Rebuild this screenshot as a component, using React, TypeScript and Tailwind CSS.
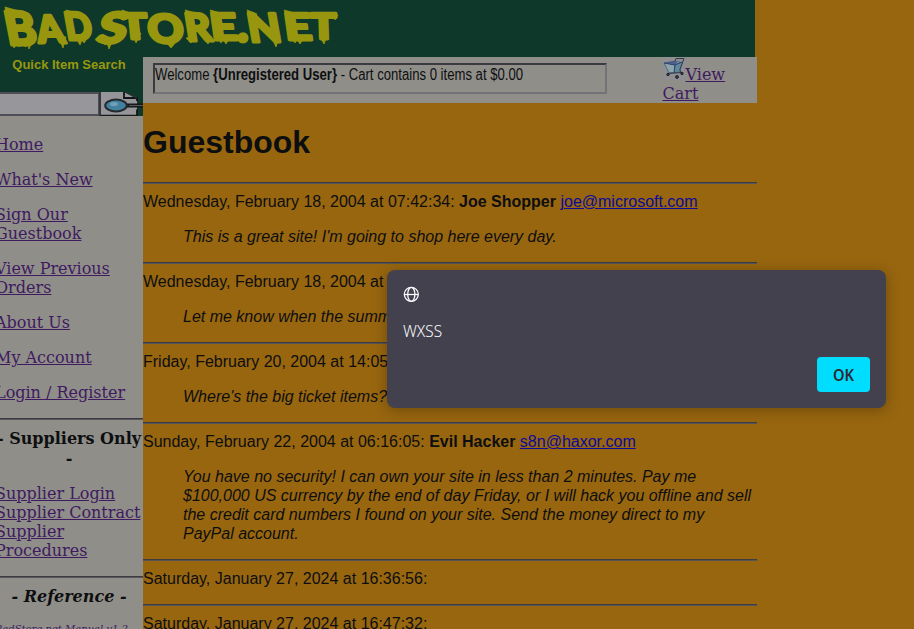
import React from "react";

type LogoLetter = { ch: string; x: number; base: number; w: number; h: number; tilt: number };

const letters: LogoLetter[] = [
  { ch: "B", x: 8, base: 45, w: 31, h: 34, tilt: 11 },
  { ch: "A", x: 39, base: 43, w: 27, h: 28, tilt: 10 },
  { ch: "D", x: 67, base: 40, w: 27, h: 28, tilt: 10 },
  { ch: "S", x: 95, base: 43, w: 29, h: 31, tilt: -14 },
  { ch: "T", x: 122, base: 39, w: 27, h: 26, tilt: 6 },
  { ch: "O", x: 149, base: 43, w: 36, h: 29, tilt: 6 },
  { ch: "R", x: 187, base: 41, w: 26, h: 28, tilt: 9 },
  { ch: "E", x: 212, base: 40, w: 27, h: 27, tilt: 8 },
  { ch: ".", x: 237, base: 42, w: 12, h: 38, tilt: 0 },
  { ch: "N", x: 250, base: 42, w: 33, h: 29, tilt: 10 },
  { ch: "E", x: 286, base: 40, w: 27, h: 27, tilt: 8 },
  { ch: "T", x: 311, base: 39, w: 26, h: 26, tilt: 2 },
];

const drips =
  "M12 42l2 6 3-4 2 3 3-3 4 3 1-5 2 7 4-9z M58 36l5 12 3-11z M76 38l4 7 2-5 2 3 4-6z M102 40l3 5 2-2 2 6 3-7 3 2 3-7z M133 35l3 8 5-10z M166 42l5 6 6-7z M186 38l5 5 3-6z M202 36l6 8 4-7z M218 38l3 5 2-4 3 5 3-5 3 2 2-4z M272 38l4 9 4-12z M292 38l3 5 2-4 3 5 3-5 3 2 2-4z M319 35l5 9 4-11z M5 7l14 4-5 9-6 2z M66 10l11 3-7 6z M185 10l11 3-7 5z M210 10l11 3-7 5z M247 10l10 4-6 7z M284 10l11 3-7 5z M122 10l3 6 8-2z M334 14l4 1-3 5z";

function Logo() {
  return (
    <svg className="block h-[57px] w-[345px]" viewBox="0 0 345 57" aria-label="BadStore.net">
      <g fill="#98960f" stroke="#98960f" strokeWidth="3" strokeLinejoin="round" fontFamily="Lato, 'Liberation Sans', sans-serif" fontWeight="900">
        {letters.map((l, i) => (
          <text
            key={i}
            transform={`translate(${l.x} ${l.base}) skewX(${l.tilt})`}
            fontSize={l.h / 0.73}
            textLength={l.w}
            lengthAdjust="spacingAndGlyphs"
          >
            {l.ch}
          </text>
        ))}
        <path d={drips} strokeWidth="0.8" />
      </g>
    </svg>
  );
}

function SearchIcon() {
  return (
    <svg className="block h-[24px] w-[44px] shrink-0" viewBox="0 0 44 24">
      <path d="M0 0h25l13 7v16H0z" fill="#96959a" />
      <path d="M0 23.4h39" stroke="#15191c" strokeWidth="1.2" />
      <path d="M1 0v24" stroke="#2b2e31" strokeWidth="1.8" />
      <path d="M25 0v6h13v3M38 17.500v6" fill="none" stroke="#111517" strokeWidth="1.8" />
      <path d="M26 0l12 6" stroke="#2a3735" strokeWidth="1.2" />
      <path d="M28 13.500h16" stroke="#14181b" strokeWidth="4" />
      <path d="M30 13.500h14" stroke="#56595a" strokeWidth="1" />
      <ellipse cx="17" cy="13.500" rx="10.800" ry="6" fill="#437f9f" stroke="#23292d" strokeWidth="2" />
      <ellipse cx="15" cy="12" rx="4" ry="2" fill="#6fa0b5" />
    </svg>
  );
}

function CartIcon() {
  return (
    <svg className="inline-block h-[23px] w-[23px] align-baseline" viewBox="0 0 23 23">
      <path d="M0 0h23v23H0z" fill="#8f8e93" />
      <path d="M1 6l12-2 6 2-3 9-10 1z" fill="#8fa3aa" stroke="#4a6a80" strokeWidth="1" />
      <path d="M11 8l8-3-3 10-5 1z" fill="#487f93" opacity=".7" />
      <path d="M1 6l11 2 7-3M12 8l-1 8" fill="none" stroke="#2b3e70" />
      <path d="M12 4l1-2.500h8l-4 11 1 3-13 1" fill="none" stroke="#35384a" />
      <path d="M2 6l10-2 3 2-4 2z" fill="#34437c" opacity=".7" />
      <g fill="#444" stroke="#1c2023">
        <circle cx="5" cy="17.500" r="1.200" />
        <circle cx="14" cy="20" r="1.400" />
        <circle cx="19" cy="16.500" r="1.200" />
      </g>
    </svg>
  );
}

function A({ children }: { children: React.ReactNode }) {
  return <span className="text-[#3e1a61] underline">{children}</span>;
}

function Rule() {
  return <div className="h-[2px] border-t border-b border-t-[#3e3c42] border-b-[#56555a]" />;
}

type EntryProps = { date: string; name?: string; mail?: string; children?: React.ReactNode };

function Entry({ date, name, mail, children }: EntryProps) {
  return (
    <div>
      <Rule />
      <p className="mb-4 mt-2">
        {date}: {name && <b>{name}</b>} {mail && <span className="text-[#0b0a9a] underline">{mail}</span>}
      </p>
      {children && <p className="mb-4 ml-10 italic">{children}</p>}
    </div>
  );
}

function Sidebar() {
  return (
    <aside className="w-[143px] shrink-0 overflow-hidden">
      <div className="h-[59px] bg-[#0e3829]">
        <p className="w-[138px] text-center font-['Liberation_Sans',Arial,sans-serif] text-[13px] leading-[15px] font-bold text-[#98980f]">
          Quick Item Search
        </p>
        <div className="mt-[20px] flex h-[24px]">
          <div className="w-[99px] border-y-2 border-r border-[#4f4d58] bg-[#97969b]" />
          <SearchIcon />
        </div>
      </div>
      <nav className="-ml-[5px] h-[513px] w-[148px] pt-[19px] leading-[19px]">
        <p className="mb-4"><A>Home</A></p>
        <p className="mb-4"><A>What's New</A></p>
        <p className="mb-4"><A>Sign Our<br />Guestbook</A></p>
        <p className="mb-4"><A>View Previous<br />Orders</A></p>
        <p className="mb-4"><A>About Us</A></p>
        <p className="mb-4"><A>My Account</A></p>
        <p className="mb-4"><A>Login / Register</A></p>
        <Rule />
        <p className="mt-[9px] mb-[15px] text-center leading-[20px] font-bold whitespace-nowrap">- Suppliers Only<br />-</p>
        <p className="mb-4 whitespace-nowrap">
          <A>Supplier Login</A><br /><A>Supplier Contract</A><br /><A>Supplier</A><br /><A>Procedures</A>
        </p>
        <Rule />
        <p className="mt-[9px] mb-4 text-center font-bold italic">- Reference -</p>
        <p className="text-[10px] leading-[13px] whitespace-nowrap italic"><A>BadStore.net Manual v1.2</A></p>
      </nav>
    </aside>
  );
}

export default function App() {
  return (
    <div className="relative h-[629px] w-[914px] overflow-hidden bg-[#98660f] font-['DejaVu_Serif',serif] text-[16px] text-[#0d0e10]">
      <header className="h-[57px] w-[755px] bg-[#0e3829]"><Logo /></header>
      <div className="flex h-[572px] w-[757px]">
        <div className="h-full shrink-0 bg-[#908e88]"><Sidebar /></div>
        <main className="w-[614px] font-['Liberation_Sans',Arial,sans-serif] leading-[19px]">
          <div className="flex h-[46px] bg-[#908e88] pl-[10px]">
            <div className="mt-[6px] h-[31px] w-[454px] border-2 border-t-[#3c3a40] border-l-[#3c3a40] border-r-[#747276] border-b-[#747276] whitespace-nowrap">
              <span className="inline-block origin-left scale-x-[0.82]">
                Welcome <b>{"{Unregistered User}"}</b> - Cart contains 0 items at $0.00
              </span>
            </div>
            <div className="ml-[55.5px] w-[90px] font-['DejaVu_Serif',serif] leading-[19px]">
              <CartIcon /><A>View<br />Cart</A>
            </div>
          </div>
          <h1 className="mt-[21px] mb-[22px] text-[32px] leading-[36px] font-bold">Guestbook</h1>
          <Entry date="Wednesday, February 18, 2004 at 07:42:34" name="Joe Shopper" mail="joe@microsoft.com">
            This is a great site! I'm going to shop here every day.
          </Entry>
          <Entry date="Wednesday, February 18, 2004 at 12:46:33">
            Let me know when the summer
          </Entry>
          <Entry date="Friday, February 20, 2004 at 14:05:22">
            Where's the big ticket items?
          </Entry>
          <Entry date="Sunday, February 22, 2004 at 06:16:05" name="Evil Hacker" mail="s8n@haxor.com">
            You have no security! I can own your site in less than 2 minutes. Pay me<br />
            $100,000 US currency by the end of day Friday, or I will hack you offline and sell<br />
            the credit card numbers I found on your site. Send the money direct to my<br />
            PayPal account.
          </Entry>
          <Entry date="Saturday, January 27, 2024 at 16:36:56" />
          <Entry date="Saturday, January 27, 2024 at 16:47:32" />
        </main>
      </div>
      <div
        role="dialog"
        className="absolute top-[270px] left-[387px] flex h-[138px] w-[499px] flex-col rounded-lg bg-[#42414d] p-4 font-['Noto_Sans',sans-serif] text-[15px] text-[#fbfbfe] shadow-[0_2px_14px_rgba(30,20,10,0.35)]"
      >
        <svg className="h-4 w-4" viewBox="0 0 16 16" fill="none" stroke="#fbfbfe" strokeWidth="1.3">
          <circle cx="8.3" cy="8.3" r="7" />
          <ellipse cx="8.3" cy="8.3" rx="3.6" ry="7" />
          <path d="M1.3 8.5h14" />
        </svg>
        <p className="mt-[19px] origin-left scale-x-[0.96] text-[16px] leading-[20px] font-light">WXSS</p>
        <button className="mt-4 h-[35px] w-[53px] self-end rounded bg-[#00ddff] font-semibold text-[#2b2a33]">
          <span className="inline-block scale-x-[0.92] text-[16px]">OK</span>
        </button>
      </div>
    </div>
  );
}
